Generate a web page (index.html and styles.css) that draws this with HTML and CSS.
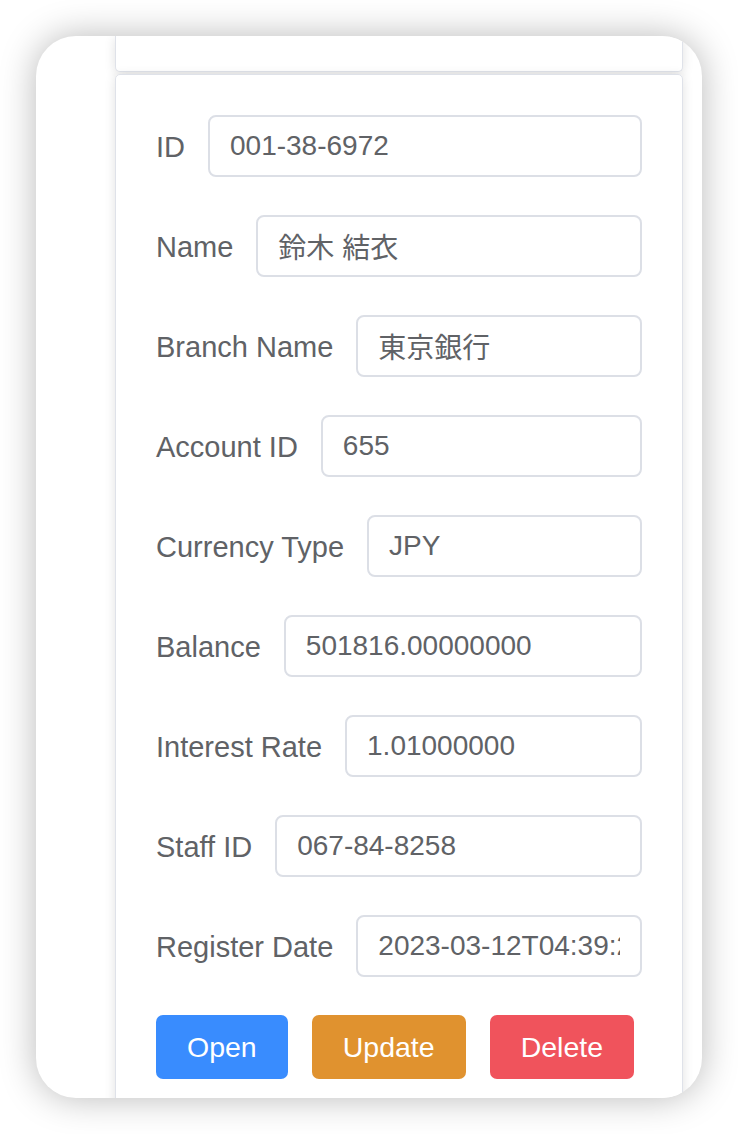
FILE: index.html
```html
<!DOCTYPE html>
<html lang="ja">
<head>
<meta charset="utf-8">
<title>Account</title>
<link rel="stylesheet" href="styles.css">
</head>
<body>
<div class="phone">
  <div class="content">
    <div class="panel panel-top"></div>
    <div class="panel panel-form">
      <form class="form">
        <div class="row"><label class="label">ID</label><div class="input"><span class="value">001-38-6972</span></div></div>
        <div class="row"><label class="label">Name</label><div class="input"><span class="value">鈴木 結衣</span></div></div>
        <div class="row"><label class="label">Branch Name</label><div class="input"><span class="value">東京銀行</span></div></div>
        <div class="row"><label class="label">Account ID</label><div class="input"><span class="value">655</span></div></div>
        <div class="row"><label class="label">Currency Type</label><div class="input"><span class="value">JPY</span></div></div>
        <div class="row"><label class="label">Balance</label><div class="input"><span class="value">501816.00000000</span></div></div>
        <div class="row"><label class="label">Interest Rate</label><div class="input"><span class="value">1.01000000</span></div></div>
        <div class="row"><label class="label">Staff ID</label><div class="input"><span class="value">067-84-8258</span></div></div>
        <div class="row"><label class="label">Register Date</label><div class="input"><span class="value">2023-03-12T04:39:21</span></div></div>
        <div class="buttons">
          <button type="button" class="btn btn-open">Open</button>
          <button type="button" class="btn btn-update">Update</button>
          <button type="button" class="btn btn-delete">Delete</button>
        </div>
      </form>
    </div>
  </div>
</div>
</body>
</html>
```
FILE: styles.css
```css
html, body {
  margin: 0;
  padding: 0;
  background: #ffffff;
}
body {
  padding: 36px;
  font-family: "Liberation Sans", "Noto Sans CJK JP", sans-serif;
  color: #606266;
}
.phone {
  width: 666px;
  height: 1062px;
  border-radius: 40px;
  background: #ffffff;
  overflow: hidden;
  box-shadow: 0 0 36px rgba(0, 0, 0, 0.28);
}
.content {
  padding: 0 19px 0 79px;
  display: flex;
  flex-direction: column;
  gap: 2px;
}
.panel {
  background: #ffffff;
  border: 1px solid #dfe2e9;
  box-shadow: 0 2px 12px rgba(0, 0, 0, 0.12);
}
.panel-top {
  height: 35px;
  border-top: none;
  border-radius: 0 0 5px 5px;
}
.panel-form {
  border-radius: 5px 5px 0 0;
  padding: 40px 40px 60px 40px;
}
.form {
  display: flex;
  flex-direction: column;
  gap: 38px;
}
.row {
  display: flex;
  align-items: center;
  gap: 23px;
  height: 62px;
}
.label {
  font-size: 29px;
  color: #606266;
  white-space: nowrap;
  position: relative;
  top: 1px;
}
.input {
  flex: 1;
  min-width: 0;
  height: 58px;
  border: 2px solid #dcdfe6;
  border-radius: 8px;
  padding: 0 20px;
  display: flex;
  align-items: center;
  font-size: 28px;
  color: #606266;
}
.value {
  flex: 1;
  min-width: 0;
  white-space: nowrap;
  overflow: hidden;
}
.buttons {
  display: flex;
  gap: 24px;
}
.btn {
  height: 64px;
  border: none;
  border-radius: 7px;
  color: #ffffff;
  font-family: "Liberation Sans", sans-serif;
  font-size: 28.5px;
  padding: 0 31px;
}
.btn-open {
  background: #398cfe;
}
.btn-update {
  background: #e0922f;
}
.btn-delete {
  background: #f0535c;
}
```
